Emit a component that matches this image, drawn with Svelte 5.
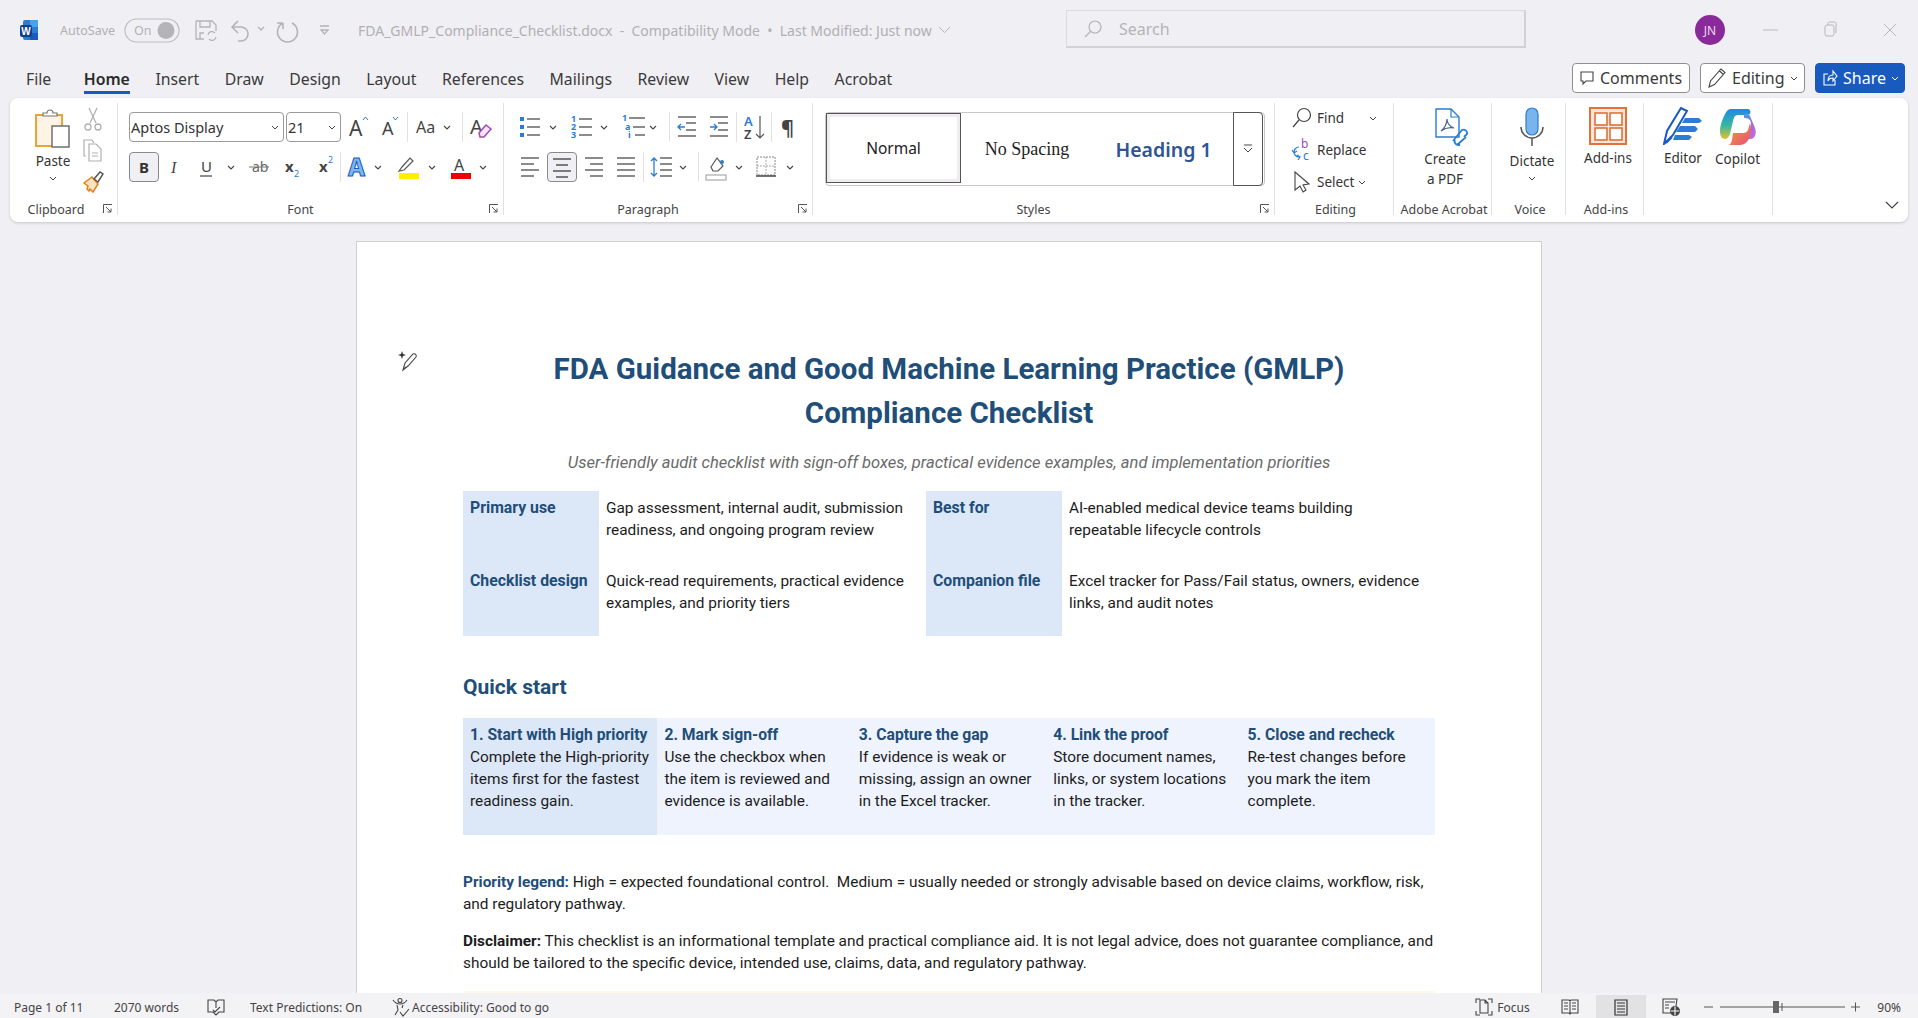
<script>
	const tabs = ['Home', 'Insert', 'Draw', 'Design', 'Layout', 'References', 'Mailings', 'Review', 'View', 'Help', 'Acrobat'];
	const steps = [
		{ title: '1. Start with High priority', lines: ['Complete the High-priority', 'items first for the fastest', 'readiness gain.'] },
		{ title: '2. Mark sign-off', lines: ['Use the checkbox when', 'the item is reviewed and', 'evidence is available.'] },
		{ title: '3. Capture the gap', lines: ['If evidence is weak or', 'missing, assign an owner', 'in the Excel tracker.'] },
		{ title: '4. Link the proof', lines: ['Store document names,', 'links, or system locations', 'in the tracker.'] },
		{ title: '5. Close and recheck', lines: ['Re-test changes before', 'you mark the item', 'complete.'] }
	];
</script>

<div class="app">
	<header class="titlebar">
		<div class="qat">
			<svg class="wordlogo" width="20" height="22" viewBox="0 0 20 22">
				<rect x="4" y="1" width="15" height="20" rx="2" fill="#2b7cd3" />
				<rect x="11" y="1" width="8" height="7" fill="#41a5ee" />
				<rect x="11" y="14" width="8" height="7" fill="#185abd" />
				<rect x="1" y="6" width="12" height="12" rx="2" fill="#103f91" />
				<text x="7" y="15.5" class="wl">W</text>
			</svg>
			<span class="autosave">AutoSave</span>
			<svg width="224" height="30" viewBox="0 0 224 30">
				<rect x="1" y="4" width="54" height="23" rx="11.5" fill="none" stroke="#bcbcc0" stroke-width="1.2" />
				<text x="10" y="20" class="dimtext">On</text>
				<circle cx="42" cy="15.5" r="8.5" fill="#b4b4b8" />
				<g fill="none" stroke="#b4b4b8" stroke-width="1.3">
					<path d="M72 6h16l4 4v6M72 6v18h8M76 6v6h10V6M76 24v-6h4" />
					<path d="M84 20a4 4 0 0 1 7-2M92 22a4 4 0 0 1-7 2" />
					<path d="M114 6l-6 6 6 6M108 12h9a7 7 0 0 1 0 14h-3" stroke-width="1.6" />
					<path d="M134 12l3 3 3-3" />
					<path d="M155 7a10 10 0 1 0 9 0M155 7v6M155 7h-6" stroke-width="1.6" transform="translate(4 1)" />
					<path d="M196 11h9M197 15h7l-3.500 4z" />
				</g>
			</svg>
		</div>
		<div class="filename">FDA_GMLP_Compliance_Checklist.docx &nbsp;-&nbsp; Compatibility Mode &nbsp;•&nbsp; Last Modified: Just now
			<svg width="13" height="8" viewBox="0 0 13 8"><path d="M1 1l5.500 5.500L12 1" fill="none" stroke="#b4b4b8" /></svg>
		</div>
		<div class="search">
			<svg width="20" height="20" viewBox="0 0 20 20" fill="none" stroke="#b4b4b8" stroke-width="1.2"><circle cx="12" cy="8" r="6" /><path d="M7.500 12.500L2 18" /></svg>
			<span>Search</span>
		</div>
		<div class="winbtns">
			<div class="avatar">JN</div>
			<svg width="193" height="30" viewBox="0 0 193 30" fill="none" stroke="#b8b8bc" stroke-width="1">
				<path d="M38 15h15" />
				<rect x="100" y="10" width="9" height="11" rx="2" />
				<path d="M103 10V8.500a1.500 1.500 0 0 1 1.500-1.500h5a1.500 1.500 0 0 1 1.500 1.500V18" />
				<path d="M159 9l12 12M171 9l-12 12" />
			</svg>
		</div>
	</header>

	<div class="tabrow">
		<nav class="tabs">
			<span class="tab filetab">File</span>
			{#each tabs as tab, i}
				<span class="tab" class:active={i === 0}>{tab}</span>
			{/each}
		</nav>
		<div class="actions">
			<button class="act comments">
				<svg width="16" height="16" viewBox="0 0 16 16" fill="none" stroke="#444" stroke-width="1.100"><path d="M2 2h12v9H7l-3 3v-3H2z" /></svg>
				Comments
			</button>
			<button class="act editbtn">
				<svg width="20" height="22" viewBox="0 0 20 22" fill="none" stroke="#444" stroke-width="1.100"><path d="M2 20l1.500-6L14 2l4 3.500L7.500 17.500z M12.500 4l4 3.500" /></svg>
				Editing
				<svg width="8" height="5" viewBox="0 0 8 5" fill="none" stroke="#444"><path d="M1 1l3 3 3-3" /></svg>
			</button>
			<button class="act share">
				<svg width="16" height="18" viewBox="0 0 16 18" fill="none" stroke="#fff" stroke-width="1.100"><path d="M6 5H2v11h11v-5M6 12c0-5 3-6 5-6V2l4 5-4 5V9c-2 0-4 0-5 3z" /></svg>
				Share
				<svg width="8" height="5" viewBox="0 0 8 5" fill="none" stroke="#fff"><path d="M1 1l3 3 3-3" /></svg>
			</button>
		</div>
	</div>

	<section class="ribbon">
		<div class="group clipboard">
			<div class="clipcontent">
				<div class="paste">
					<svg width="38" height="40" viewBox="0 0 38 40">
						<rect x="2" y="7" width="26" height="31" fill="#fdf4e6" stroke="#e8a33d" stroke-width="2" />
						<path d="M9 8V5h4a3 3 0 0 1 6 0h4v3z" fill="#fff" stroke="#777" stroke-width="1.200" />
						<rect x="18" y="18" width="17" height="21" fill="#fff" stroke="#666" stroke-width="1.400" />
					</svg>
					<span>Paste</span>
					<svg width="8" height="5" viewBox="0 0 8 5" fill="none" stroke="#444"><path d="M1 1l3 3 3-3" /></svg>
				</div>
				<div class="cliptools">
					<svg width="22" height="26" viewBox="0 0 22 26" fill="none" stroke="#b0b0b0" stroke-width="1.300">
						<path d="M7 2l7 15M15 2L8 17" /><circle cx="6" cy="21" r="3" /><circle cx="16" cy="21" r="3" />
					</svg>
					<svg width="22" height="26" viewBox="0 0 22 26" fill="none" stroke="#b0b0b0" stroke-width="1.200">
						<path d="M4 19H2V3h8l2 3" /><path d="M7 7h7l5 5v12H7z" /><path d="M10 16h6M10 19h6" />
					</svg>
					<svg width="22" height="26" viewBox="0 0 22 26" fill="none" stroke-width="1.500">
						<path d="M2 15l8-6 6 7-5 8-3-3-1 2-2-2 1-3z" fill="#fbe3bd" stroke="#e67e1e" />
						<path d="M12 11l6-7 3 2-5 8z" fill="#fff" stroke="#555" />
					</svg>
				</div>
			</div>
			<div class="glabel">Clipboard</div>
			<svg class="launch" width="10" height="10" viewBox="0 0 10 10" fill="none" stroke="#555"><path d="M.5 9V.5H9M3 3l5 5M8 4.500V8H4.500" /></svg>
		</div>

		<div class="group font">
			<div class="rows">
				<div class="row">
					<div class="select fname">Aptos Display<svg width="8" height="5" viewBox="0 0 8 5" fill="none" stroke="#444"><path d="M1 1l3 3 3-3" /></svg></div>
					<div class="select fsize">21<svg width="8" height="5" viewBox="0 0 8 5" fill="none" stroke="#444"><path d="M1 1l3 3 3-3" /></svg></div>
					<svg width="66" height="30" viewBox="0 0 66 30">
						<text x="8" y="24" class="gl bigA">A</text>
						<path d="M22 8l2.500-3 2.500 3" fill="none" stroke="#2b7cd3" />
						<text x="41" y="23" class="gl mid">A</text>
						<path d="M52 5l2.500 3 2.500-3" fill="none" stroke="#2b7cd3" />
					</svg>
					<span class="sep"></span>
					<svg width="54" height="30" viewBox="0 0 54 30">
						<text x="8" y="21" class="gl aa">Aa</text>
						<path class="ch" d="M36 14l3 3 3-3" />
					</svg>
					<span class="sep"></span>
					<svg width="36" height="30" viewBox="0 0 36 30">
						<text x="7" y="22" class="gl big2">A</text>
						<path d="M16 21l7-8 5 4-7 8h-4z" fill="#f4e4f6" stroke="#a349b0" stroke-width="1.500" />
					</svg>
				</div>
				<div class="row">
					<div class="tbtn bold">B</div>
					<svg width="181" height="30" viewBox="0 0 181 30">
						<text x="12" y="21" class="gl ital">I</text>
						<text x="42" y="20" class="gl und">U</text><path d="M41 24h12" stroke="#444" stroke-width="1.200" />
						<path class="ch" d="M69 14l3 3 3-3" />
						<text x="93" y="20" class="gl strike">ab</text><path d="M90 15h20" stroke="#777" />
						<text x="126" y="20" class="gl sc">x</text><text x="135" y="25" class="gl sub">2</text>
						<text x="160" y="20" class="gl sc">x</text><text x="169" y="11" class="gl sub">2</text>
					</svg>
					<span class="sep"></span>
					<svg width="160" height="30" viewBox="0 0 160 30">
						<text x="7" y="24" class="gl effect">A</text>
						<path class="ch" d="M34 14l3 3 3-3" />
						<path d="M58 19l3-4 8-9 3 3-9 9z" fill="#fff" stroke="#555" stroke-width="1.200" />
						<rect x="58" y="21" width="20" height="6" fill="#ffef00" />
						<path class="ch" d="M88 14l3 3 3-3" />
						<text x="113" y="19" class="gl fc">A</text>
						<rect x="110" y="21" width="20" height="6" fill="#f00000" />
						<path class="ch" d="M139 14l3 3 3-3" />
					</svg>
				</div>
			</div>
			<div class="glabel">Font</div>
			<svg class="launch" width="10" height="10" viewBox="0 0 10 10" fill="none" stroke="#555"><path d="M.5 9V.5H9M3 3l5 5M8 4.500V8H4.500" /></svg>
		</div>

		<div class="group para">
			<div class="rows">
				<div class="row">
					<svg width="156" height="30" viewBox="0 0 156 30">
						<g fill="#2b7cd3"><rect x="7" y="5" width="4" height="4" /><rect x="7" y="13" width="4" height="4" /><rect x="7" y="21" width="4" height="4" /></g>
						<path d="M14 7h13M14 15h13M14 23h13" stroke="#666" stroke-width="1.400" />
						<path class="ch" d="M37 14l3 3 3-3" />
						<text x="58" y="10" class="gl num">1</text><text x="58" y="18" class="gl num">2</text><text x="58" y="26" class="gl num">3</text>
						<path d="M66 7h13M66 15h13M66 23h13" stroke="#666" stroke-width="1.400" />
						<path class="ch" d="M88 14l3 3 3-3" />
						<text x="109" y="9" class="gl num">1</text><text x="112" y="18" class="gl num">a</text><text x="115" y="26" class="gl num">i</text>
						<path d="M116 6h16M120 15h12M122 23h10" stroke="#666" stroke-width="1.400" />
						<path class="ch" d="M137 14l3 3 3-3" />
					</svg>
					<span class="sep"></span>
					<svg width="66" height="30" viewBox="0 0 66 30">
						<path d="M8 5h18M16 11h10M16 18h10M8 24h18" stroke="#666" stroke-width="1.400" />
						<path d="M15 15H8m3-3l-3 3 3 3" fill="none" stroke="#2b7cd3" stroke-width="1.300" />
						<path d="M40 5h18M48 11h10M48 18h10M40 24h18" stroke="#666" stroke-width="1.400" />
						<path d="M40 15h7m-3-3l3 3-3 3" fill="none" stroke="#2b7cd3" stroke-width="1.300" />
					</svg>
					<span class="sep"></span>
					<svg width="34" height="30" viewBox="0 0 34 30">
						<text x="7" y="14" class="gl sortA">A</text><text x="7" y="27" class="gl sortZ">Z</text>
						<path d="M23 4v22m-4-4l4 4 4-4" fill="none" stroke="#555" stroke-width="1.200" />
					</svg>
					<span class="sep"></span>
					<svg width="31" height="30" viewBox="0 0 31 30">
						<text x="9" y="23" class="gl pil">¶</text>
					</svg>
				</div>
				<div class="row">
					<svg width="34" height="30" viewBox="0 0 34 30"><path d="M8 6h18M8 12h13M8 18h18M8 24h13" stroke="#666" stroke-width="1.400" /></svg>
					<div class="tbtn center"><svg width="20" height="22" viewBox="0 0 20 22"><path d="M1 3h18M4 9h12M1 15h18M4 21h12" stroke="#555" stroke-width="1.400" /></svg></div>
					<svg width="66" height="30" viewBox="0 0 66 30">
						<path d="M8 6h18M13 12h13M8 18h18M13 24h13M40 6h18M40 12h18M40 18h18M40 24h18" stroke="#666" stroke-width="1.400" />
					</svg>
					<span class="sep"></span>
					<svg width="54" height="30" viewBox="0 0 54 30">
						<path d="M16 6h12M16 12h12M16 18h12M16 24h12" stroke="#666" stroke-width="1.400" />
						<path d="M10 6v18M7 9l3-3 3 3M7 21l3 3 3-3" fill="none" stroke="#2b7cd3" stroke-width="1.300" />
						<path class="ch" d="M36 14l3 3 3-3" />
					</svg>
					<span class="sep"></span>
					<svg width="104" height="30" viewBox="0 0 104 30">
						<path d="M12 15l6-9 6 8-5 5h-5z" fill="#fff" stroke="#555" stroke-width="1.200" /><circle cx="23" cy="10" r="2" fill="#2b7cd3" />
						<rect x="7" y="23" width="20" height="5" fill="#fff" stroke="#999" />
						<path class="ch" d="M37 14l3 3 3-3" />
						<rect x="58" y="5" width="18" height="18" fill="none" stroke="#888" stroke-dasharray="2 1" /><path d="M67 5v18M58 14h18" stroke="#aaa" stroke-dasharray="2 1" />
						<path d="M57 24h20" stroke="#444" stroke-width="1.500" />
						<path class="ch" d="M88 14l3 3 3-3" />
					</svg>
				</div>
			</div>
			<div class="glabel">Paragraph</div>
			<svg class="launch" width="10" height="10" viewBox="0 0 10 10" fill="none" stroke="#555"><path d="M.5 9V.5H9M3 3l5 5M8 4.500V8H4.500" /></svg>
		</div>

		<div class="group styles">
			<div class="gallery">
				<div class="style normal">Normal</div>
				<div class="style nospacing">No Spacing</div>
				<div class="style heading">Heading 1</div>
				<div class="more">
					<svg width="10" height="10" viewBox="0 0 10 10" fill="none" stroke="#444"><path d="M1 1h8M1 4l4 4 4-4" /></svg>
				</div>
			</div>
			<div class="glabel">Styles</div>
			<svg class="launch" width="10" height="10" viewBox="0 0 10 10" fill="none" stroke="#555"><path d="M.5 9V.5H9M3 3l5 5M8 4.500V8H4.500" /></svg>
		</div>

		<div class="group editing side">
			<div class="edlist">
				<div class="editem">
					<svg width="22" height="22" viewBox="0 0 22 22" fill="none" stroke="#444" stroke-width="1.200"><circle cx="13" cy="8" r="6.500" /><path d="M8 13L2 20" /></svg>
					<span>Find</span>
					<svg class="far" width="8" height="5" viewBox="0 0 8 5" fill="none" stroke="#444"><path d="M1 1l3 3 3-3" /></svg>
				</div>
				<div class="editem">
					<svg width="22" height="24" viewBox="0 0 22 24" fill="none">
						<text x="10" y="10" class="gl repb">b</text><text x="12" y="22" class="gl repc">c</text>
						<path d="M8 9a5 5 0 0 0-5 5 5 5 0 0 0 5 5M1 12l2 3 3-2M6 17l3 2-2 3" stroke="#2b7cd3" stroke-width="1.200" />
					</svg>
					<span>Replace</span>
				</div>
				<div class="editem">
					<svg width="22" height="24" viewBox="0 0 22 24" fill="none" stroke="#444" stroke-width="1.100"><path d="M4 2v18l5-4 3 6 3-2-3-5 6-1z" /></svg>
					<span>Select</span>
					<svg width="8" height="5" viewBox="0 0 8 5" fill="none" stroke="#444"><path d="M1 1l3 3 3-3" /></svg>
				</div>
			</div>
			<div class="glabel">Editing</div>
		</div>

		<div class="group side acrobat">
			<div class="bigbtn">
				<svg width="38" height="40" viewBox="0 0 38 40" fill="none">
					<path d="M3 2h15l8 8v20H3z" fill="#fff" stroke="#2b7cd3" stroke-width="1.400" />
					<path d="M18 2v8h8" stroke="#2b7cd3" stroke-width="1.200" />
					<path d="M8 24c3-2 6-7 6-12 0 4 3 8 7 9-4-1-9 0-13 3z" stroke="#4a6a9a" stroke-width="1.200" />
					<path d="M20 34l9-11a3.500 3.500 0 0 1 5 4l-3 3M27 38l-2 0a3.500 3.500 0 0 1-3-5M24 38l9-8" stroke="#2b7cd3" stroke-width="1.800" />
				</svg>
				<span class="bl">Create<br />a PDF</span>
			</div>
			<div class="glabel">Adobe Acrobat</div>
		</div>

		<div class="group side voice">
			<div class="bigbtn">
				<svg width="26" height="40" viewBox="0 0 26 40" fill="none">
					<rect x="7" y="1" width="12" height="27" rx="6" fill="#79b4ec" stroke="#2b7cd3" stroke-width="1.200" />
					<path d="M2 20a11 11 0 0 0 22 0M13 31v8" stroke="#555" stroke-width="1.500" />
				</svg>
				<span class="bl">Dictate</span>
				<svg width="8" height="5" viewBox="0 0 8 5" fill="none" stroke="#444"><path d="M1 1l3 3 3-3" /></svg>
			</div>
			<div class="glabel">Voice</div>
		</div>

		<div class="group side addins">
			<div class="bigbtn">
				<svg width="38" height="38" viewBox="0 0 38 38" fill="#fff" stroke="#e2703a" stroke-width="1.600">
					<rect x="1" y="1" width="36" height="36" stroke-width="2" fill="#fbe7dc" />
					<rect x="6" y="6" width="12" height="12" /><rect x="21" y="6" width="12" height="12" />
					<rect x="6" y="21" width="12" height="12" /><rect x="21" y="21" width="12" height="12" />
				</svg>
				<span class="bl">Add-ins</span>
			</div>
			<div class="glabel">Add-ins</div>
		</div>

		<div class="group pair">
			<div class="bigbtn">
				<svg width="40" height="38" viewBox="0 0 40 38" fill="none">
					<path d="M1 37l3-13L18 1l6 3-14 24z" fill="#fff" stroke="#185abd" stroke-width="2" />
					<path d="M3 36l6-6" stroke="#185abd" stroke-width="2" />
					<path d="M22 11h14l3 3-3 2H19zM17 19h15l3 3-3 3H13zM12 28h14l3 2-3 3H10z" fill="#2b7cd3" />
				</svg>
				<span class="bl">Editor</span>
			</div>
			<div class="bigbtn copilot">
				<svg width="38" height="40" viewBox="0 0 38 40" fill="none">
					<defs>
						<linearGradient id="cpa" x1="0" y1="0" x2="0" y2="1"><stop offset="0" stop-color="#1e88e5" /><stop offset=".55" stop-color="#35b8a0" /><stop offset="1" stop-color="#e6c02e" /></linearGradient>
						<linearGradient id="cpb" x1="0" y1="0" x2="1" y2="1"><stop offset="0" stop-color="#3fa0f0" /><stop offset=".6" stop-color="#a86ad8" /><stop offset="1" stop-color="#d070d0" /></linearGradient>
						<linearGradient id="cpc" x1="0" y1="0" x2="1" y2="1"><stop offset="0" stop-color="#f0a030" /><stop offset="1" stop-color="#e8507a" /></linearGradient>
					</defs>
					<path d="M12 2h16c3 0 4 2 3 5l-5 1H19c-3 0-4 2-5 6l-3 13c-1 3-3 5-5 5-4 0-5-4-5-8 0-6 3-13 5-17 2-4 4-5 6-5z" fill="url(#cpa)" />
					<path d="M25 7c3-1 5 0 6 2l5 12c2 6 0 11-5 11h-6c3 0 4-3 5-6l2-9c0-4-2-6-7-6z" fill="url(#cpb)" />
					<path d="M14 26h10c3 0 4-1 5-3l2-7c2 6 1 18-6 21-2 1-4 1-7 1H9c3 0 4-3 5-12z" fill="url(#cpc)" />
				</svg>
				<span class="bl">Copilot</span>
			</div>
		</div>

		<svg class="collapse" width="14" height="9" viewBox="0 0 14 9" fill="none" stroke="#444" stroke-width="1.200"><path d="M1 1l6 6 6-6" /></svg>
	</section>

	<main class="workspace">
		<article class="page">
			<svg class="pensparkle" width="22" height="22" viewBox="0 0 22 22" fill="none" stroke="#444" stroke-width="1.100">
				<path d="M5 20l2-7 8-9c2-1 4 1 3 3l-8 9z M5 20l3-3" />
				<path d="M4 1l1 3 3 1-3 1-1 3-1-3-3-1 3-1z" fill="#333" stroke="none" />
			</svg>
			<h1>FDA Guidance and Good Machine Learning Practice (GMLP)<br />Compliance Checklist</h1>
			<p class="subtitle">User-friendly audit checklist with sign-off boxes, practical evidence examples, and implementation priorities</p>

			<div class="infotable">
				<div class="k">Primary use</div>
				<div class="v">Gap assessment, internal audit, submission<br />readiness, and ongoing program review</div>
				<div class="k">Best for</div>
				<div class="v">AI-enabled medical device teams building<br />repeatable lifecycle controls</div>
				<div class="k">Checklist design</div>
				<div class="v">Quick-read requirements, practical evidence<br />examples, and priority tiers</div>
				<div class="k">Companion file</div>
				<div class="v">Excel tracker for Pass/Fail status, owners, evidence<br />links, and audit notes</div>
			</div>

			<h2>Quick start</h2>

			<div class="steps">
				{#each steps as step, i}
					<div class="step" class:first={i === 0}>
						<strong>{step.title}</strong>
						{#each step.lines as line}
							<div>{line}</div>
						{/each}
					</div>
				{/each}
			</div>

			<p class="legend"><b>Priority legend:</b> High = expected foundational control.&nbsp; Medium = usually needed or strongly advisable based on device claims, workflow, risk, and regulatory pathway.</p>
			<p class="disclaimer"><b>Disclaimer:</b> This checklist is an informational template and practical compliance aid. It is not legal advice, does not guarantee compliance, and should be tailored to the specific device, intended use, claims, data, and regulatory pathway.</p>
			<div class="cream"></div>
		</article>
	</main>

	<footer class="status">
		<span class="s1">Page 1 of 11</span>
		<span class="s2">2070 words</span>
		<svg class="s3" width="18" height="18" viewBox="0 0 18 18" fill="none" stroke="#444" stroke-width="1.100"><path d="M1 2h6l2 2 2-2h6v12h-5l-3 3-3-3H1zM9 4v6M6 12l2 2 5-5" /></svg>
		<span class="s4">Text Predictions: On</span>
		<svg class="s5" width="20" height="20" viewBox="0 0 20 20" fill="none" stroke="#444" stroke-width="1.100"><circle cx="9" cy="3.500" r="2" /><path d="M2 3c2 3 4 4 7 4s5-1 7-4M6 8l1 5-3 5M12 8l-1 3M9 15l3 4 6-7" /></svg>
		<span>Accessibility: Good to go</span>
		<div class="sright">
			<svg width="18" height="18" viewBox="0 0 18 18" fill="none" stroke="#444" stroke-width="1.100"><path d="M1 5V1h4M13 1h4v4M17 13v4h-4M5 17H1v-4M5 2h5l3 3v10H5zM10 2v3h3" /></svg>
			<span class="focus">Focus</span>
			<svg class="readv" width="18" height="16" viewBox="0 0 18 16" fill="none" stroke="#444" stroke-width="1.100"><path d="M1 1h7l1 1 1-1h7v13h-7l-1 1-1-1H1zM9 2v12M3 4h4M3 7h4M3 10h4M11 4h4M11 7h4M11 10h4" /></svg>
			<div class="printv">
				<svg width="14" height="17" viewBox="0 0 14 17" fill="none" stroke="#333" stroke-width="1.200"><path d="M1 1h12v15H1zM3 4h8M3 7h8M3 10h8M3 13h8" /></svg>
			</div>
			<svg class="webv" width="18" height="18" viewBox="0 0 18 18" fill="none" stroke="#444" stroke-width="1.100"><path d="M9 15H1V1h14l-1 7M3 4h10M3 7h4M3 10h4" /><circle cx="13" cy="13" r="4.500" fill="#444" /><path d="M8.500 13h9M13 8.500v9" stroke="#fff" /></svg>
			<svg class="zoomctl" width="156" height="14" viewBox="0 0 156 14">
				<path d="M0 7h9M16 7h125M147 7h9M151.500 2.500v9" stroke="#555" fill="none" />
				<path d="M78 3v8" stroke="#555" />
				<rect x="69" y="1" width="6" height="12" fill="#666" />
			</svg>
			<span class="pct">90%</span>
		</div>
	</footer>
</div>

<style>
	:global(body) {
		margin: 0;
		background: #f0eff3;
	}

	.app {
		height: 1018px;
		display: flex;
		flex-direction: column;
		overflow: hidden;
		background: #f0eff3;
		font-family: "Noto Sans", "Liberation Sans", sans-serif;
		color: #333;
	}

	svg {
		display: block;
		flex: none;
	}

	.ch {
		fill: none;
		stroke: #444;
		stroke-width: 1.100;
	}

	.gl {
		fill: #444;
		font-family: "Noto Sans", sans-serif;
	}

	/* title bar */
	.titlebar {
		height: 60px;
		flex: none;
		display: grid;
		grid-template-columns: 358px 708px 460px 1fr;
		align-items: center;
	}

	.qat {
		display: flex;
		align-items: center;
		padding-left: 19px;
	}

	.wl {
		font: 700 10px "Liberation Sans", sans-serif;
		fill: #fff;
		text-anchor: middle;
	}

	.autosave {
		margin-left: 21px;
		width: 64px;
		font-size: 12.500px;
		color: #b0b0b4;
	}

	.dimtext {
		font-size: 12.500px;
		fill: #b4b4b8;
		font-family: "Noto Sans", sans-serif;
	}

	.filename {
		display: flex;
		align-items: center;
		gap: 6px;
		font-size: 14px;
		color: #b0b0b4;
	}

	.search {
		height: 38px;
		display: flex;
		align-items: center;
		gap: 16px;
		padding-left: 16px;
		box-sizing: border-box;
		border: 1px solid #dcdbdf;
		border-bottom: 2px solid #d2d1d5;
		border-right: 2px solid #d2d1d5;
		font-size: 16px;
		color: #b4b4b8;
		margin-top: -2px;
	}

	.winbtns {
		display: flex;
		align-items: center;
		padding-left: 169px;
	}

	.avatar {
		width: 30px;
		height: 30px;
		border-radius: 50%;
		background: #8a2a9a;
		color: #ecd9ef;
		font-size: 12px;
		display: flex;
		align-items: center;
		justify-content: center;
	}

	/* tabs */
	.tabrow {
		height: 38px;
		flex: none;
		display: flex;
		align-items: center;
		justify-content: space-between;
		padding: 0 13px 0 26px;
	}

	.tabs {
		display: flex;
		gap: 25.500px;
		font-size: 15.800px;
		color: #3a3a3a;
	}

	.filetab {
		margin-right: 7px;
	}

	.tab {
		position: relative;
		line-height: 24px;
	}

	.tab.active {
		font-weight: 600;
		color: #2a2a2a;
	}

	.tab.active::after {
		content: '';
		position: absolute;
		left: 0;
		right: 0;
		bottom: -3px;
		height: 3px;
		background: #185abd;
	}

	.actions {
		display: flex;
		gap: 10px;
		margin-top: -2px;
	}

	.act {
		height: 30px;
		display: flex;
		align-items: center;
		gap: 5px;
		border: 1px solid #8f8f8f;
		border-radius: 4px;
		background: #fff;
		color: #3a3a3a;
		font: 16px "Noto Sans", sans-serif;
		padding: 0 6px;
		box-sizing: border-box;
	}

	.comments { width: 118px; }
	.editbtn { width: 105px; }

	.share {
		width: 90px;
		background: #185abd;
		border-color: #185abd;
		color: #fff;
	}

	/* ribbon */
	.ribbon {
		position: relative;
		flex: none;
		height: 124px;
		margin: 0 10px;
		padding-top: 5px;
		box-sizing: border-box;
		background: #fff;
		border-radius: 8px;
		box-shadow: 0 1px 3px rgba(0, 0, 0, 0.18);
		display: flex;
		align-items: flex-start;
	}

	.group {
		position: relative;
		height: 112px;
		box-sizing: border-box;
		border-right: 1px solid #e1e1e1;
		flex: none;
	}

	.glabel {
		position: absolute;
		left: 0;
		right: 0;
		top: 98px;
		text-align: center;
		font-size: 12.500px;
		line-height: 18px;
		color: #444;
	}

	.launch {
		position: absolute;
		right: 4px;
		top: 101px;
	}

	.clipboard { width: 108px; }

	.clipboard .glabel {
		right: 15px;
	}

	.font .glabel,
	.para .glabel,
	.styles .glabel {
		right: 20px;
	}

	.side .glabel {
		left: 3px;
	}

	.clipcontent {
		display: flex;
		padding: 5px 0 0 24px;
	}

	.paste {
		width: 38px;
		display: flex;
		flex-direction: column;
		align-items: center;
		font-size: 13.500px;
		color: #333;
	}

	.paste span {
		margin-top: 2px;
		line-height: 22px;
	}

	.paste svg:last-child {
		margin-top: 4px;
	}

	.cliptools {
		margin-left: 10px;
		margin-top: -2px;
		display: flex;
		flex-direction: column;
		gap: 5px;
	}

	.font { width: 386px; padding: 9px 0 0 11px; }
	.para { width: 309px; padding: 9px 0 0 9px; }

	.rows {
		display: flex;
		flex-direction: column;
		gap: 10px;
	}

	.row {
		display: flex;
		align-items: center;
		height: 30px;
	}

	.sep {
		width: 1px;
		height: 30px;
		background: #e1e1e1;
		flex: none;
	}

	.select {
		height: 30px;
		box-sizing: border-box;
		border: 1px solid #9a9a9a;
		border-radius: 4px;
		display: flex;
		align-items: center;
		justify-content: space-between;
		padding: 0 4px 0 1px;
		font-size: 14.500px;
		color: #333;
	}

	.fname { width: 155px; margin-right: 2px; }
	.fsize { width: 55px; }

	.bigA { font-size: 21px; }
	.mid { font-size: 18px; }
	.aa { font-size: 16px; }
	.big2 { font-size: 20px; }
	.ital { font: italic 16px "Liberation Serif", serif; }
	.und { font-size: 15px; }
	.strike { font-size: 14px; fill: #666; }
	.sc { font-size: 15px; font-weight: 700; }
	.sub { font-size: 9px; fill: #2b7cd3; }
	.effect { font-size: 24px; font-weight: 800; fill: #7db8ee; stroke: #185abd; stroke-width: 1; }
	.fc { font-size: 16px; }
	.num { font-size: 9px; font-weight: 700; fill: #2b7cd3; }
	.sortA { font-size: 13px; font-weight: 600; fill: #2b7cd3; }
	.sortZ { font-size: 13px; font-weight: 600; }
	.pil { font-size: 20px; font-weight: 700; }
	.repb { font-size: 12px; fill: #a349b0; }
	.repc { font-size: 12px; fill: #2b7cd3; }

	.tbtn {
		width: 30px;
		height: 30px;
		box-sizing: border-box;
		border: 1px solid #8a8a8a;
		border-radius: 4px;
		background: #f0eff3;
		display: flex;
		align-items: center;
		justify-content: center;
		flex: none;
	}

	.bold {
		font-weight: 700;
		font-size: 15px;
		color: #333;
	}

	.styles { width: 462px; padding: 9px 0 0 12px; }

	.gallery {
		width: 440px;
		height: 74px;
		box-sizing: border-box;
		border: 1px solid #c8c8c8;
		border-radius: 4px;
		display: flex;
		align-items: center;
	}

	.style {
		height: 72px;
		display: flex;
		align-items: center;
		justify-content: center;
		box-sizing: border-box;
		flex: none;
	}

	.normal {
		width: 135px;
		border: 1px solid #555;
		outline: 3px solid #efedf0;
		outline-offset: -4px;
		font-size: 15.500px;
		color: #222;
		margin-top: -2px;
		height: 70px;
	}

	.nospacing {
		width: 134px;
		font: 18px "Liberation Serif", serif;
		color: #222;
		padding-right: 2px;
	}

	.heading {
		width: 132px;
		padding-left: 5px;
		font-size: 19.500px;
		font-weight: 600;
		color: #2f5496;
	}

	.more {
		width: 30px;
		height: 74px;
		box-sizing: border-box;
		margin: -1px -1px -1px 6px;
		border: 1px solid #555;
		border-radius: 0 4px 4px 0;
		display: flex;
		align-items: center;
		justify-content: center;
	}

	.group.editing {
		width: 119px;
		padding: 0 0 0 16px;
	}

	.edlist {
		display: flex;
		flex-direction: column;
		margin-top: -1px;
	}

	.editem {
		height: 32px;
		display: flex;
		align-items: center;
		gap: 4px;
		font-size: 13.500px;
		color: #333;
	}

	.far {
		margin-left: 21px;
	}

	.group.acrobat { width: 98px; }
	.group.voice { width: 74px; }
	.group.addins { width: 78px; }

	.group.pair {
		width: 129px;
		display: flex;
		gap: 12px;
		padding-left: 19px;
	}

	.bigbtn {
		display: flex;
		flex-direction: column;
		align-items: center;
		padding-top: 4px;
		box-sizing: border-box;
	}

	.side .bigbtn {
		width: 100%;
		padding-left: 7px;
	}

	.group.acrobat .bigbtn {
		padding-left: 5px;
	}

	.acrobat svg {
		margin-left: 13px;
	}

	.bl {
		margin-top: 3px;
		font-size: 13.500px;
		line-height: 20px;
		text-align: center;
		color: #333;
	}

	.acrobat .bl,
	.copilot .bl {
		margin-top: 2px;
	}

	.voice .bl {
		margin-top: 4px;
	}

	.voice .bigbtn svg:last-child {
		margin-top: 5px;
	}

	.collapse {
		position: absolute;
		right: 9px;
		top: 103px;
	}

	/* document */
	.workspace {
		flex: 1;
		min-height: 0;
		overflow: hidden;
		display: flex;
		justify-content: center;
		padding: 19px 20px 0 0;
		position: relative;
	}

	.page {
		position: relative;
		width: 1186px;
		height: 900px;
		box-sizing: border-box;
		flex: none;
		background: #fff;
		border: 1px solid #cfcfcf;
		padding: 105px 106px 0;
		font-family: Roboto, "Noto Sans", sans-serif;
		font-size: 15.400px;
		line-height: 22px;
		color: #1c1c1c;
	}

	.pensparkle {
		position: absolute;
		left: 41px;
		top: 108px;
	}

	h1 {
		margin: 0;
		text-align: center;
		font-size: 29.500px;
		line-height: 44px;
		font-weight: 700;
		color: #1f4e79;
	}

	.subtitle {
		margin: 17px 0 17px;
		text-align: center;
		font-size: 16.550px;
		font-style: italic;
		color: #6a6a6a;
	}

	.infotable {
		display: grid;
		grid-template-columns: 136px 327px 136px 1fr;
		grid-auto-rows: 72.500px;
	}

	.k {
		background: #dce7f8;
		padding: 6px 7px 4px;
		font-size: 15.800px;
		font-weight: 700;
		color: #1f4e79;
	}

	.v {
		padding: 6px 7px 4px;
		white-space: nowrap;
	}

	h2 {
		margin: 37px 0 17px;
		font-size: 21px;
		line-height: 28px;
		font-weight: 700;
		color: #1f4e79;
	}

	.steps {
		display: grid;
		grid-template-columns: repeat(5, 1fr);
		background: #eef3fd;
		height: 117px;
	}

	.step {
		padding: 6px 7px 4px;
		white-space: nowrap;
	}

	.step.first {
		background: #dce7f8;
	}

	.step strong {
		display: block;
		font-size: 15.700px;
		color: #1f4e79;
	}

	.legend {
		margin: 36px 0 14.500px;
	}

	.legend b {
		color: #1f4e79;
	}

	.disclaimer {
		margin: 0 0 17px;
	}

	.cream {
		height: 60px;
		background: #fff9ec;
	}

	/* status bar */
	.status {
		height: 25px;
		flex: none;
		position: relative;
		display: flex;
		align-items: center;
		padding-left: 14px;
		background: #f3f2f5;
		font-size: 12px;
		color: #444;
	}

	.status > * {
		position: relative;
		top: 1.500px;
	}

	.s1 { width: 100px; }
	.s2 { width: 93px; }
	.s3 { margin-right: 25px; }
	.s4 { width: 141px; }
	.s5 { margin-right: 1px; }

	.sright {
		margin-left: auto;
		display: flex;
		align-items: center;
		height: 25px;
		padding-right: 17px;
	}

	.focus { margin-left: 4px; width: 64px; }
	.readv { margin-right: 17px; }

	.printv {
		width: 50px;
		height: 25px;
		background: #e2e1e4;
		display: flex;
		align-items: center;
		justify-content: center;
		margin-right: 16px;
	}

	.webv { margin-right: 24px; }
	.pct { margin-left: 17px; }
</style>
